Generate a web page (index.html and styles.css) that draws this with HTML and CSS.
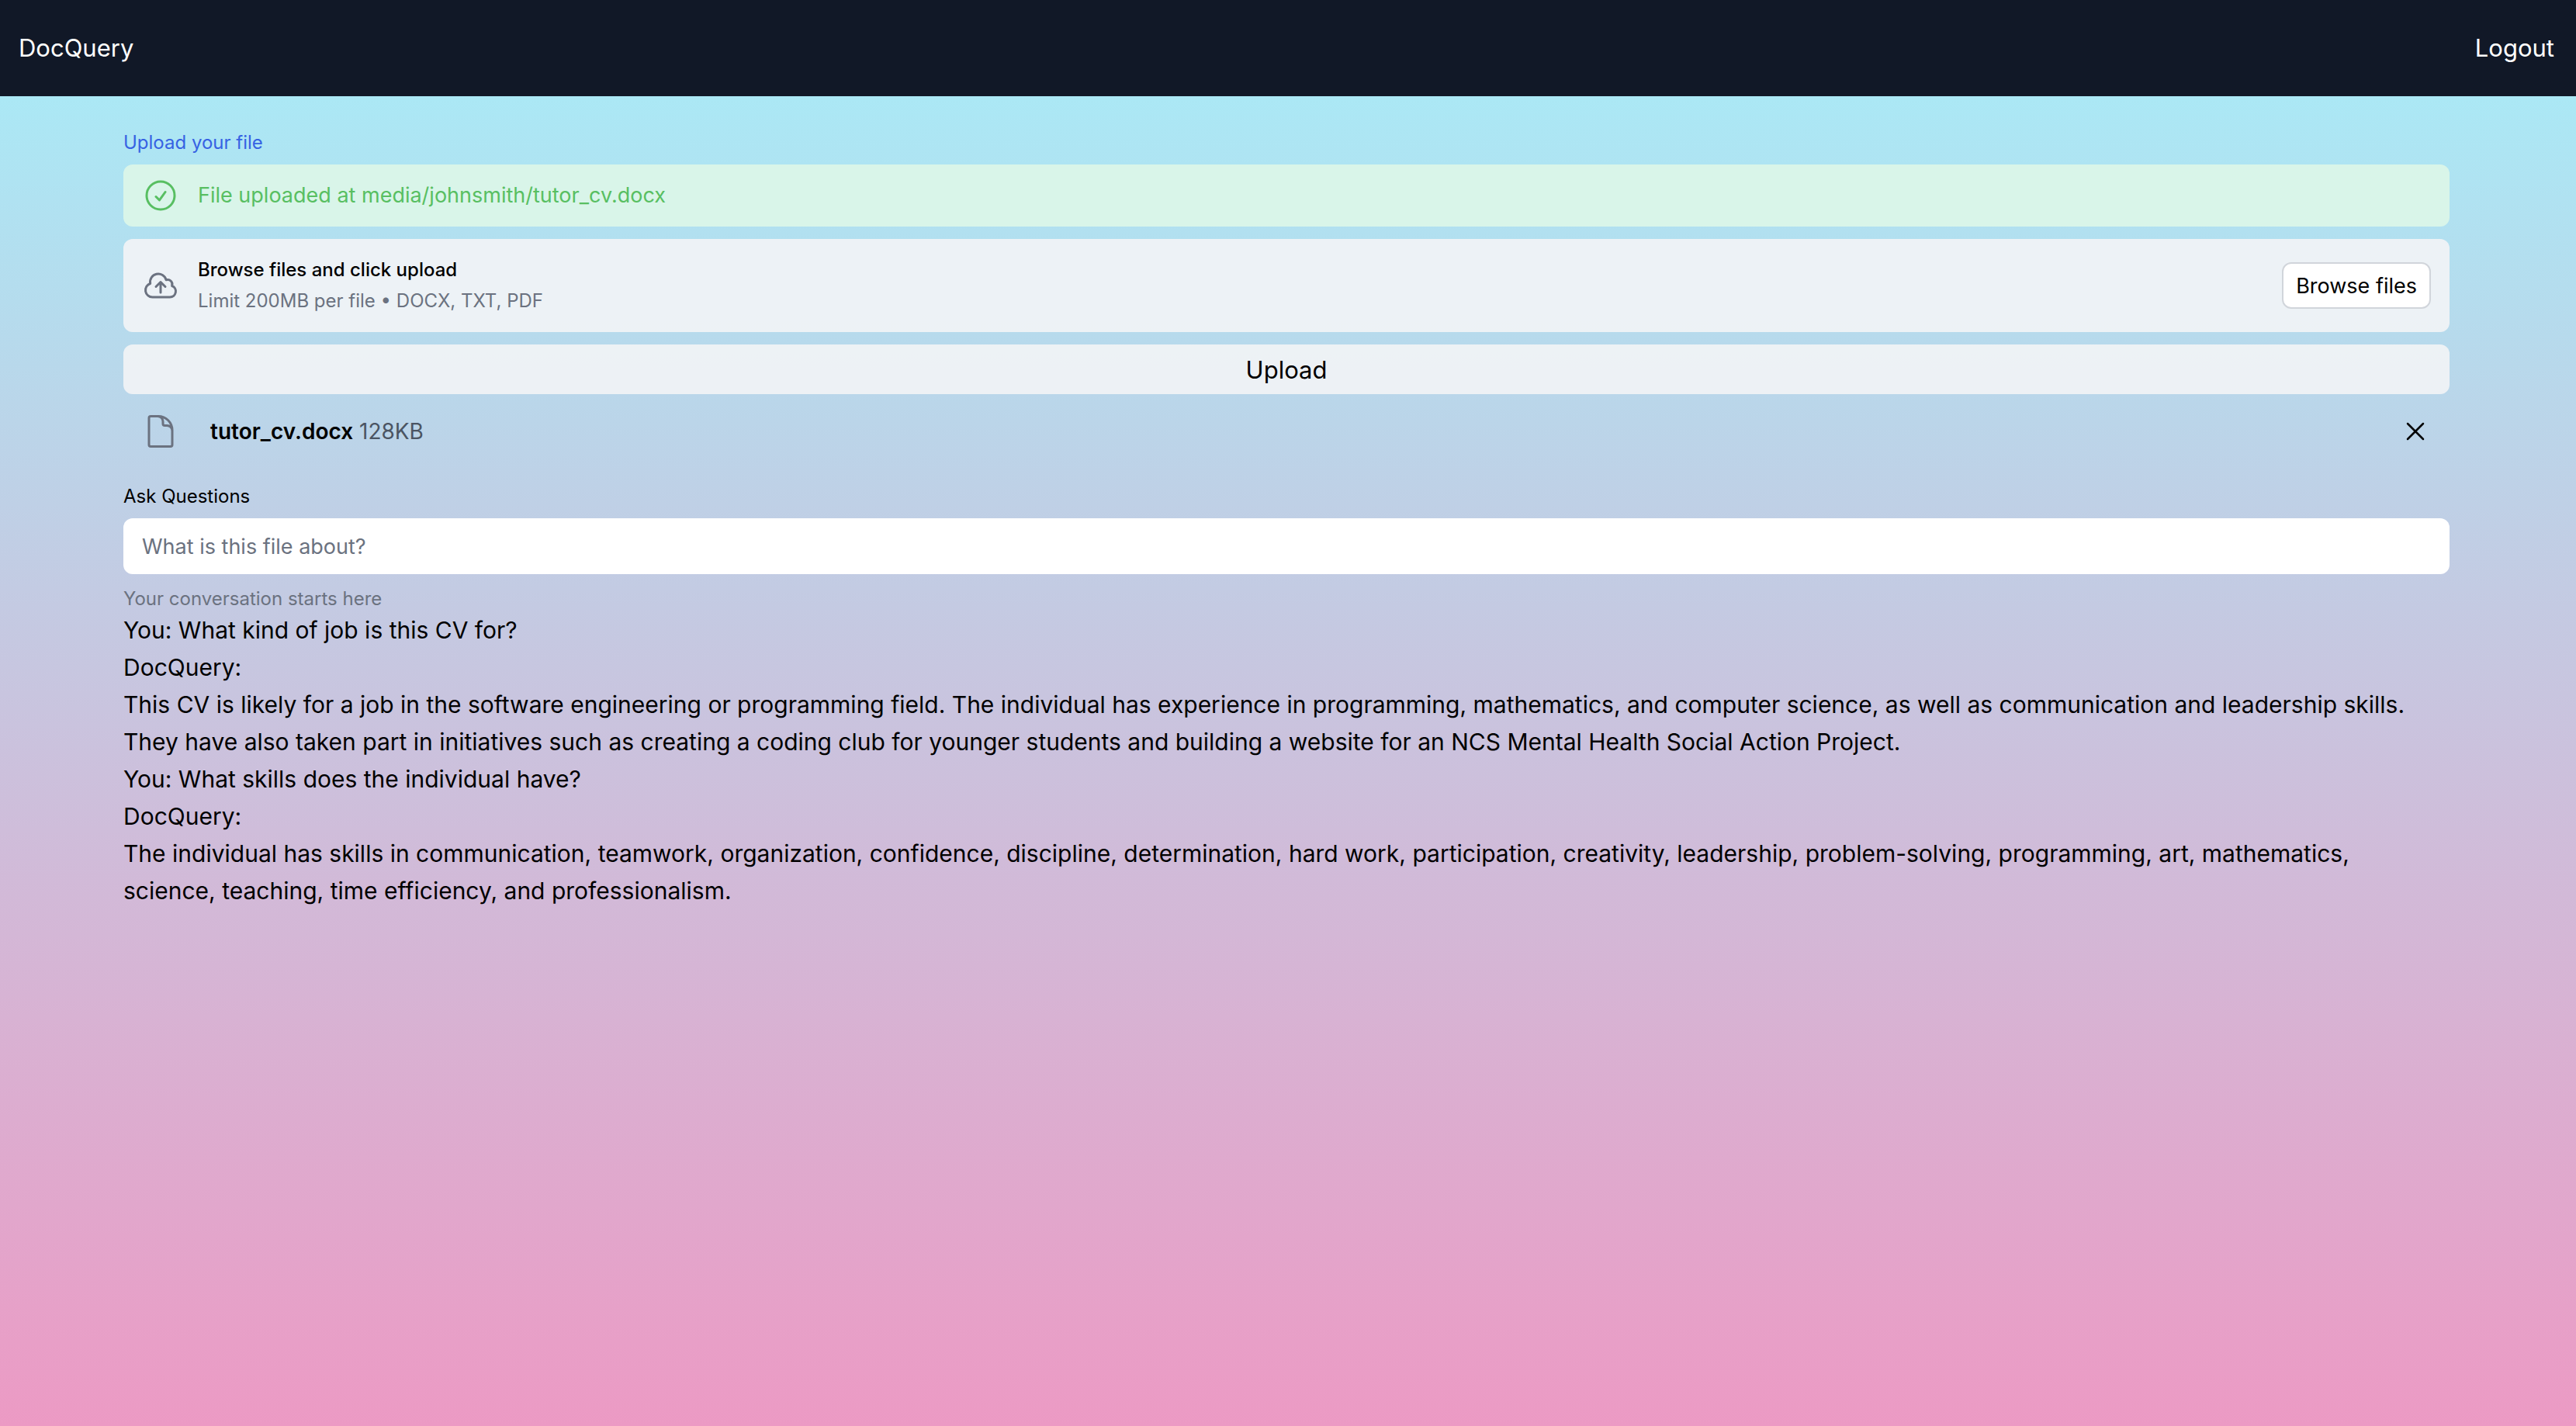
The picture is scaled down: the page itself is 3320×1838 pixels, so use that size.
FILE: index.html
```html
<!DOCTYPE html>
<html lang="en">
<head>
<meta charset="utf-8">
<title>DocQuery</title>
<link rel="stylesheet" href="styles.css">
</head>
<body>
<header class="navbar">
  <a class="nav-link" href="#">DocQuery</a>
  <a class="nav-link" href="#">Logout</a>
</header>
<main class="page">
  <form class="upload">
    <h2 class="upload-title">Upload your file</h2>
    <div class="alert" role="status">
      <svg class="icon" viewBox="0 0 24 24" aria-hidden="true"><path d="M9 12.750L11.250 15 15 9.750M21 12a9 9 0 11-18 0 9 9 0 0118 0z"/></svg>
      <span>File uploaded at media/johnsmith/tutor_cv.docx</span>
    </div>
    <div class="dropzone">
      <svg class="icon" viewBox="0 0 24 24" aria-hidden="true"><path d="M12 16.500V9.750m0 0l3 3m-3-3l-3 3M6.750 19.500a4.500 4.500 0 01-1.410-8.775 5.250 5.250 0 0110.233-2.330 3 3 0 013.758 3.848A3.752 3.752 0 0118 19.500H6.750z"/></svg>
      <div class="dropzone-text">
        <p class="dropzone-title">Browse files and click upload</p>
        <p class="dropzone-hint">Limit 200MB per file • DOCX, TXT, PDF</p>
      </div>
      <button class="browse" type="button">Browse files</button>
    </div>
    <button class="submit" type="submit">Upload</button>
    <div class="file">
      <svg class="icon" viewBox="0 0 24 24" aria-hidden="true"><path d="M19.500 14.250v-2.625a3.375 3.375 0 00-3.375-3.375h-1.500A1.125 1.125 0 0113.500 7.125v-1.500a3.375 3.375 0 00-3.375-3.375H8.250m2.250 0H5.625c-.621 0-1.125.504-1.125 1.125v17.250c0 .621.504 1.125 1.125 1.125h12.750c.621 0 1.125-.504 1.125-1.125V11.250a9 9 0 00-9-9z"/></svg>
      <span class="file-info"><strong class="file-name">tutor_cv.docx</strong> 128KB</span>
      <button class="remove" type="button" aria-label="Remove file">
        <svg class="icon icon-small" viewBox="0 0 24 24" aria-hidden="true"><path d="M6 18L18 6M6 6l12 12"/></svg>
      </button>
    </div>
  </form>
  <section class="chat">
    <label class="question-label" for="question">Ask Questions</label>
    <input class="question" id="question" type="text" placeholder="What is this file about?">
    <p class="chat-hint">Your conversation starts here</p>
    <div class="messages">
      <p>You: What kind of job is this CV for?</p>
      <p>DocQuery:</p>
      <p>This CV is likely for a job in the software engineering or programming field. The individual has experience in programming, mathematics, and computer science, as well as communication and leadership skills. They have also taken part in initiatives such as creating a coding club for younger students and building a website for an NCS Mental Health Social Action Project.</p>
      <p>You: What skills does the individual have?</p>
      <p>DocQuery:</p>
      <p>The individual has skills in communication, teamwork, organization, confidence, discipline, determination, hard work, participation, creativity, leadership, problem-solving, programming, art, mathematics, science, teaching, time efficiency, and professionalism.</p>
    </div>
  </section>
</main>
</body>
</html>
```
FILE: styles.css
```css
* {
  box-sizing: border-box;
}

body {
  display: flex;
  flex-direction: column;
  min-height: 100vh;
  margin: 0;
  background: #111827;
  color: #000;
  font-family: Inter, "Liberation Sans", sans-serif;
  font-size: 31px;
  line-height: 48px;
}

h2,
p {
  margin: 0;
}

button,
input {
  color: #000;
  font-family: inherit;
}

button {
  cursor: pointer;
}

.navbar {
  display: flex;
  align-items: center;
  justify-content: space-between;
  height: 124px;
  padding: 0 28px 0 24px;
}

.nav-link {
  color: #fff;
  text-decoration: none;
}

.page {
  flex: 1;
  padding: 40px 163px 40px 159px;
  background: linear-gradient(#abe8f5, #ec9ac4);
}

.upload-title {
  margin-bottom: 8px;
  color: #3662e3;
  font-size: 24px;
  font-weight: 400;
  line-height: 40px;
}

.icon {
  flex: none;
  width: 48px;
  height: 48px;
  fill: none;
  stroke: currentColor;
  stroke-width: 1.5;
  stroke-linecap: round;
  stroke-linejoin: round;
}

.icon-small {
  width: 40px;
  height: 40px;
}

.alert,
.dropzone {
  display: flex;
  align-items: center;
  gap: 24px;
  margin-bottom: 16px;
  padding: 0 24px;
  border-radius: 12px;
}

.alert {
  height: 80px;
  background: #d9f5e9;
  color: #58bf62;
  font-size: 27px;
}

.dropzone {
  height: 120px;
  background: rgba(243, 244, 246, .9);
  color: #6b7280;
  font-size: 24px;
  line-height: 40px;
}

.dropzone-title {
  color: #000;
  font-weight: 500;
}

.browse {
  height: 60px;
  margin-left: auto;
  padding: 0 16px;
  border: 2px solid #d1d5db;
  border-radius: 12px;
  background: #fff;
  font-size: 27px;
}

.submit {
  display: block;
  width: 100%;
  height: 64px;
  border: 0;
  border-radius: 12px;
  background: rgba(243, 244, 246, .9);
  font-size: 31px;
}

.file {
  display: flex;
  align-items: center;
  gap: 40px;
  height: 96px;
  padding: 0 24px;
  color: #6b7280;
  font-size: 28px;
}

.file-info {
  color: #4b5563;
}

.file-name {
  color: #000;
  font-weight: 600;
}

.remove {
  display: flex;
  margin-left: auto;
  padding: 0;
  border: 0;
  background: none;
}

.question-label {
  display: block;
  margin: 16px 0 8px;
  font-size: 24px;
  line-height: 40px;
}

.question {
  display: block;
  width: 100%;
  height: 72px;
  padding: 0 24px;
  border: 0;
  border-radius: 12px;
  background: #fff;
  font-size: 27px;
}

.question::placeholder {
  color: #6b7280;
  opacity: 1;
}

.chat-hint {
  margin-top: 16px;
  color: #6b7280;
  font-size: 24px;
  line-height: 32px;
}

.messages {
  padding-right: 12px;
  font-size: 30px;
}
```
